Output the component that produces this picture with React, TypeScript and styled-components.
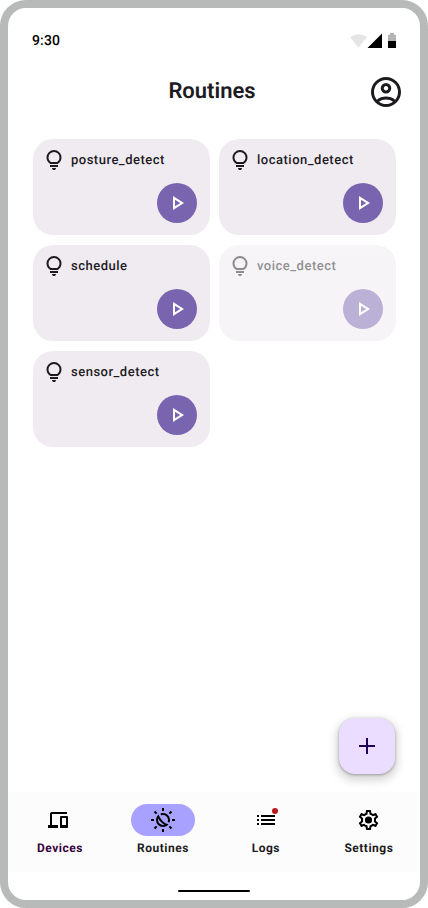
import React from 'react';
import styled, { createGlobalStyle } from 'styled-components';

const GlobalStyle = createGlobalStyle`
  *, *::before, *::after { box-sizing: border-box; }
  body { margin: 0; background: #fff; font-family: Roboto, sans-serif; text-rendering: geometricPrecision; }
  button { font: inherit; border: 0; padding: 0; cursor: pointer; }
  svg { display: block; flex: none; }
`;

const Phone = styled.div`
  width: 428px;
  height: 908px;
  border: 8px solid #b8bab9;
  border-radius: 26px;
  background: #fff;
  display: flex;
  flex-direction: column;
  overflow: hidden;
`;

const StatusBar = styled.div`
  height: 52px;
  padding: 12px 24px 0;
  display: flex;
  align-items: center;
  justify-content: space-between;
`;

const Time = styled.span`
  padding-top: 2px;
  font-size: 14px;
  line-height: 20px;
  font-weight: 500;
  letter-spacing: 0.14px;
  color: #000;
`;

const Header = styled.header`
  height: 64px;
  padding: 0 16px 0 12px;
  display: grid;
  grid-template-columns: 36px 1fr 36px;
  align-items: center;
  color: #1d1b1f;
`;

const Title = styled.h1`
  margin: 0;
  padding-bottom: 1px;
  text-align: center;
  font-size: 22px;
  line-height: 28px;
  font-weight: 600;
`;

const Cards = styled.main`
  flex: 1;
  padding: 15px 24px 0 25px;
  display: grid;
  grid-template-columns: 177px 177px;
  grid-auto-rows: 96px;
  gap: 10px 9px;
`;

const Card = styled.section<{ $disabled?: boolean }>`
  padding: 9px 13px 12px 9px;
  border-radius: 20px;
  background: #f0ebf1;
  opacity: ${p => (p.$disabled ? 0.5 : 1)};
  display: flex;
  flex-direction: column;
  justify-content: space-between;
`;

const CardHead = styled.div`
  display: flex;
  align-items: center;
  gap: 5px;
  color: #1d1b1f;
`;

const CardName = styled.span`
  padding-top: 2px;
  font-size: 13px;
  line-height: 20px;
  font-weight: 500;
  letter-spacing: 0.5px;
`;

const PlayButton = styled.button`
  width: 40px;
  height: 40px;
  border-radius: 50%;
  align-self: flex-end;
  background: #7965af;
  color: #fff;
  display: grid;
  place-items: center;
`;

const FabRow = styled.div`
  display: flex;
  justify-content: flex-end;
  padding: 0 25px 18px 0;
`;

const Fab = styled.button`
  width: 56px;
  height: 56px;
  border-radius: 16px;
  background: #eaddff;
  color: #21005d;
  display: grid;
  place-items: center;
  box-shadow: 0 1px 3px rgba(0, 0, 0, 0.3), 0 4px 8px 3px rgba(0, 0, 0, 0.15);
`;

const NavBar = styled.nav`
  height: 80px;
  padding-top: 12px;
  background: #fcfcfc;
  display: grid;
  grid-template-columns: repeat(4, 1fr);
`;

const Tab = styled.a<{ $color?: string }>`
  display: flex;
  flex-direction: column;
  align-items: center;
  gap: 4px;
  font-size: 12px;
  line-height: 16px;
  font-weight: 700;
  letter-spacing: 0.5px;
  color: ${p => p.$color ?? '#1d1b1f'};
`;

const TabLabel = styled.span`
  padding-left: 0.8px;
`;

const Pill = styled.span<{ $active?: boolean; $inset?: number }>`
  position: relative;
  width: 64px;
  height: 32px;
  padding-right: ${p => p.$inset ?? 0}px;
  border-radius: 16px;
  background: ${p => (p.$active ? '#a8a1ff' : 'transparent')};
  color: #000;
  display: grid;
  place-items: center;
`;

const Badge = styled.i`
  position: absolute;
  top: 4px;
  right: 20px;
  width: 6px;
  height: 6px;
  border-radius: 50%;
  background: #ba1a1a;
`;

const HomeArea = styled.div`
  height: 28px;
  display: flex;
  justify-content: center;
  padding-top: 18px;
`;

const HomeHandle = styled.span`
  width: 72px;
  height: 2px;
  border-radius: 1px;
  background: #000;
`;

const paths = {
  bulb: 'M480-80q-33 0-56.5-23.5T400-160h160q0 33-23.5 56.5T480-80ZM320-200v-80h320v80H320Zm10-120q-69-41-109.5-110T180-580q0-125 87.5-212.5T480-880q125 0 212.5 87.5T780-580q0 81-40.5 150T630-320H330Zm24-80h252q45-32 69.5-79T700-580q0-92-64-156t-156-64q-92 0-156 64t-64 156q0 54 24.5 101t69.5 79Z',
  account: 'M234-276q51-39 114-61.5T480-360q69 0 132 22.5T726-276q35-41 54.5-93T800-480q0-133-93.5-226.5T480-800q-133 0-226.5 93.5T160-480q0 59 19.5 111t54.5 93Zm246-164q-59 0-99.5-40.5T340-580q0-59 40.5-99.5T480-720q59 0 99.5 40.5T620-580q0 59-40.5 99.5T480-440Zm0 360q-83 0-156-31.5T197-197q-54-54-85.5-127T80-480q0-83 31.5-156T197-763q54-54 127-85.5T480-880q83 0 156 31.5T763-763q54 54 85.5 127T880-480q0 83-31.5 156T763-197q-54 54-127 85.5T480-80Zm0-80q53 0 100-15.5t86-44.5q-39-29-86-44.5T480-280q-53 0-100 15.5T294-220q39 29 86 44.5T480-160Zm0-360q26 0 43-17t17-43q0-26-17-43t-43-17q-26 0-43 17t-17 43q0 26 17 43t43 17Z',
  play: 'M320-200v-560l440 280-440 280Zm80-146 210-134-210-134v268Z',
  plus: 'M440-440H160v-80h280v-280h80v280h280v80H520v280h-80v-280Z',
  devices: 'M80-160v-120h80v-440q0-33 23.5-56.5T240-800h600v80H240v440h240v120H80Zm520 0q-17 0-28.5-11.5T560-200v-400q0-17 11.5-28.5T600-640h240q17 0 28.5 11.5T880-600v400q0 17-11.5 28.5T840-160H600Zm40-120h160v-280H640v280Z',
  routine: 'M396-396q-32-32-58.5-67T289-537q-5 14-6.5 28.5T281-480q0 83 58 141t141 58q14 0 28.5-2t28.5-6q-39-22-74-48.5T396-396Zm57-56q51 51 114 87.5T702-308q-40 51-98 79.5T481-200q-117 0-198.5-81.5T201-480q0-65 28.5-123t79.5-98q20 72 56.5 135T453-452Zm290 72q-20-5-39.5-11T665-405q8-18 11.5-36.5T680-480q0-83-58.5-141.5T480-680q-20 0-38.5 3.5T405-665q-8-19-13.5-38T381-742q24-9 49-13.5t51-4.5q117 0 198.5 81.5T761-480q0 26-4.5 51T743-380ZM440-840v-120h80v120h-80Zm0 840v-120h80V0h-80Zm323-706-57-57 85-84 57 56-85 85ZM169-113l-57-56 85-85 57 57-85 84Zm671-327v-80h120v80H840ZM0-440v-80h120v80H0Zm791 328-85-85 57-57 84 85-56 57ZM197-706l-84-85 56-57 85 85-57 57Z',
  list: 'M280-600v-80h560v80H280Zm0 160v-80h560v80H280Zm0 160v-80h560v80H280ZM120-600v-80h80v80h-80Zm0 160v-80h80v80h-80Zm0 160v-80h80v80h-80Z',
};

const Icon = ({ name, size = 24 }: { name: keyof typeof paths; size?: number }) => (
  <svg width={size} height={size} viewBox="0 -960 960 960" fill="currentColor">
    <path d={paths[name]} />
  </svg>
);

const GearIcon = () => (
  <svg width="24" height="24" viewBox="0.5 0 24 24" fill="currentColor">
    <path d="M19.43 12.98c.04-.32.07-.64.07-.98s-.03-.66-.07-.98l2.11-1.65c.19-.15.24-.42.12-.64l-2-3.46a.5.5 0 0 0-.61-.22l-2.49 1c-.52-.4-1.08-.73-1.69-.98l-.38-2.65A.488.488 0 0 0 14 2h-4c-.25 0-.46.18-.49.42l-.38 2.65c-.61.25-1.17.59-1.69.98l-2.49-1a.5.5 0 0 0-.61.22l-2 3.46c-.13.22-.07.49.12.64l2.11 1.65c-.04.32-.07.65-.07.98s.03.66.07.98l-2.11 1.65c-.19.15-.24.42-.12.64l2 3.46c.12.22.39.3.61.22l2.49-1c.52.4 1.08.73 1.69.98l.38 2.65c.03.24.24.42.49.42h4c.25 0 .46-.18.49-.42l.38-2.65c.61-.25 1.17-.59 1.69-.98l2.49 1c.23.09.49 0 .61-.22l2-3.46c.12-.22.07-.49-.12-.64l-2.11-1.65zm-1.98-1.71c.04.31.05.52.05.73s-.02.43-.05.73l-.14 1.13.89.7 1.08.84-.7 1.21-1.27-.51-1.04-.42-.9.68c-.43.32-.84.56-1.25.73l-1.06.43-.16 1.13-.2 1.35h-1.4l-.19-1.35-.16-1.13-1.06-.43c-.43-.18-.83-.41-1.23-.71l-.91-.7-1.06.43-1.27.51-.7-1.21 1.08-.84.89-.7-.14-1.13c-.03-.31-.05-.54-.05-.74s.02-.43.05-.73l.14-1.13-.89-.7-1.08-.84.7-1.21 1.27.51 1.04.42.9-.68c.43-.32.84-.56 1.25-.73l1.06-.43.16-1.13.2-1.35h1.39l.19 1.35.16 1.13 1.06.43c.43.18.83.41 1.23.71l.91.7 1.06-.43 1.27-.51.7 1.21-1.07.85-.89.7.14 1.13z" />
    <circle cx="12" cy="12" r="3.6" />
  </svg>
);

const StatusIcons = () => (
  <svg width="46" height="16" viewBox="350 32.5 46 16">
    <path d="M358.5 48.2 350 37.6a13.8 13.8 0 0 1 17 0Z" fill="#000" fillOpacity=".1" />
    <path d="M367.5 48.5 382 34V48.5Z" fill="#000" />
    <path d="M388 41.5v-6.2h2v-1.8h4v1.8h2v6.2Z" fill="#b3b3b3" />
    <path d="M388 41.5h8v7h-8Z" fill="#000" />
  </svg>
);

const routines = [
  { name: 'posture_detect' },
  { name: 'location_detect' },
  { name: 'schedule' },
  { name: 'voice_detect', disabled: true },
  { name: 'sensor_detect' },
];

export default function App() {
  return (
    <>
      <GlobalStyle />
      <Phone>
        <StatusBar>
          <Time>9:30</Time>
          <StatusIcons />
        </StatusBar>
        <Header>
          <span />
          <Title>Routines</Title>
          <Icon name="account" size={36} />
        </Header>
        <Cards>
          {routines.map(r => (
            <Card key={r.name} $disabled={r.disabled}>
              <CardHead>
                <Icon name="bulb" />
                <CardName>{r.name}</CardName>
              </CardHead>
              <PlayButton disabled={r.disabled} aria-label={`Run ${r.name}`}>
                <Icon name="play" />
              </PlayButton>
            </Card>
          ))}
        </Cards>
        <FabRow>
          <Fab aria-label="Add routine">
            <Icon name="plus" />
          </Fab>
        </FabRow>
        <NavBar>
          <Tab $color="#36003c">
            <Pill $inset={3}><Icon name="devices" /></Pill>
            <TabLabel>Devices</TabLabel>
          </Tab>
          <Tab>
            <Pill $active><Icon name="routine" /></Pill>
            <TabLabel>Routines</TabLabel>
          </Tab>
          <Tab>
            <Pill><Icon name="list" /><Badge /></Pill>
            <TabLabel>Logs</TabLabel>
          </Tab>
          <Tab>
            <Pill><GearIcon /></Pill>
            <TabLabel>Settings</TabLabel>
          </Tab>
        </NavBar>
        <HomeArea><HomeHandle /></HomeArea>
      </Phone>
    </>
  );
}
